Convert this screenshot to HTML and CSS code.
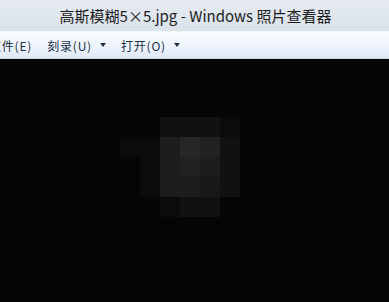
FILE: index.html
```html
<!DOCTYPE html>
<html>
<head>
<meta charset="utf-8">
<link rel="stylesheet" href="styles.css">
</head>
<body>
<div class="window">
  <div class="titlebar">高斯模糊5×5.jpg - Windows 照片查看器</div>
  <div class="toolbar">
    <span class="item first">文件(E)</span>
    <span class="item">刻录(U)<span class="arrow"></span></span>
    <span class="item">打开(O)<span class="arrow"></span></span>
  </div>
  <div class="viewer">
    <div class="pixels">
      <i class="c0"></i><i class="c0"></i><i class="c2"></i><i class="c2"></i><i class="c2"></i><i class="c1"></i>
      <i class="c1"></i><i class="c1"></i><i class="c4"></i><i class="c6"></i><i class="c5"></i><i class="c2"></i>
      <i class="c0"></i><i class="c1"></i><i class="c4"></i><i class="c5"></i><i class="c4"></i><i class="c2"></i>
      <i class="c0"></i><i class="c1"></i><i class="c4"></i><i class="c4"></i><i class="c3"></i><i class="c2"></i>
      <i class="c0"></i><i class="c0"></i><i class="c1"></i><i class="c2"></i><i class="c2"></i><i class="c0"></i>
    </div>
  </div>
</div>
</body>
</html>
```
FILE: styles.css
```css
* { box-sizing: border-box; }
html, body { margin: 0; padding: 0; }
body {
  width: 389px;
  height: 302px;
  overflow: hidden;
  background: #050505;
  font-family: "Noto Sans CJK SC", "Noto Sans", sans-serif;
}
.window {
  display: flex;
  flex-direction: column;
  height: 302px;
}
.titlebar {
  height: 31px;
  background: linear-gradient(#e6ebf1, #dae2ea);
  color: #1c1c1c;
  font-size: 15px;
  line-height: 31px;
  text-align: center;
  padding-left: 2px;
  white-space: nowrap;
}
.toolbar {
  height: 28px;
  background: linear-gradient(#fbfdff 0%, #eef4fb 50%, #dfe9f5 100%);
  border-top: 1px solid #f4f7fa;
  border-bottom: 1px solid #c7d3df;
  display: flex;
  align-items: center;
  gap: 15px;
  font-size: 12px;
  letter-spacing: 0.8px;
  color: #1f2f44;
  white-space: nowrap;
}
.item {
  display: flex;
  align-items: center;
}
.item.first {
  margin-left: -11px;
}
.arrow {
  width: 0;
  height: 0;
  margin-left: 8px;
  border-left: 3.5px solid transparent;
  border-right: 3.5px solid transparent;
  border-top: 4px solid #1f2f44;
}
.viewer {
  flex: 1;
  background: #050505;
  padding: 58px 0 0 120px;
}
.pixels {
  display: grid;
  grid-template-columns: repeat(6, 20px);
  grid-template-rows: repeat(5, 20px);
}
.pixels i { display: block; }
.c0 { background: #050505; }
.c1 { background: #0b0b0b; }
.c2 { background: #111111; }
.c3 { background: #181818; }
.c4 { background: #1d1d1d; }
.c5 { background: #222222; }
.c6 { background: #272727; }
```
